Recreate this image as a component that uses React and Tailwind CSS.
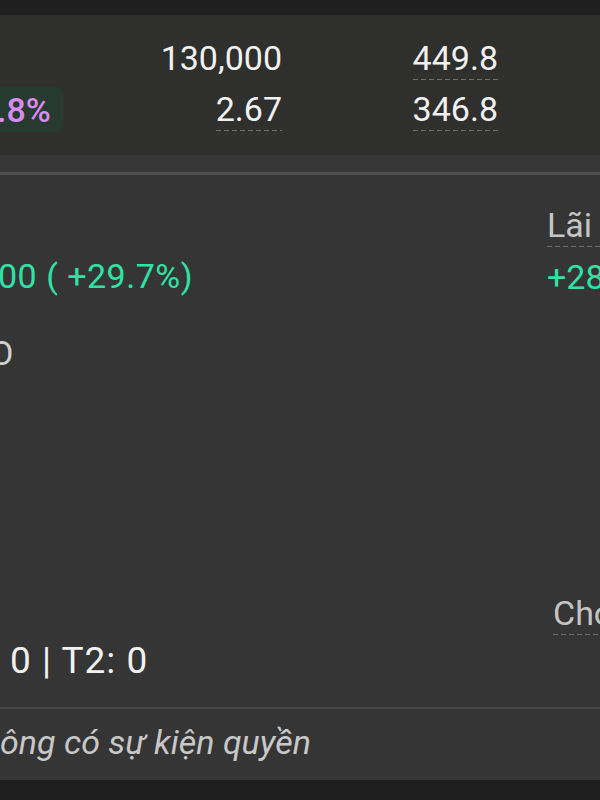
import React from 'react'

const dash = 'h-px w-full bg-[repeating-linear-gradient(90deg,#707070_0_5px,transparent_5px_8px)]'

// Giá trị có gạch chân chấm (tooltip)
function Dotted({ children, className = '' }) {
  return (
    <div className={`inline-flex flex-col ${className}`}>
      <span className="leading-[40px]">{children}</span>
      <span className={`mt-px ${dash}`}></span>
    </div>
  )
}

export default function App() {
  return (
    <div className="w-[600px] h-[800px] overflow-hidden flex flex-col bg-[#353535] font-['Roboto',sans-serif] text-[34px] text-[#f1f1f1]">
      <div className="h-[15px] shrink-0 bg-[#1f1f1f]"></div>

      {/* Bảng giá */}
      <div className="h-[140px] shrink-0 bg-[#2f2f2d] pt-[23px]">
        <div className="flex h-[42px] items-start">
          <div className="w-[63px]"></div>
          <div className="w-[219px] text-right leading-[40px]">130,000</div>
          <div className="w-[216px] flex justify-end">
            <Dotted>449.8</Dotted>
          </div>
        </div>
        <div className="mt-[7px] flex h-[45px] items-center">
          <div className="w-[63px] h-[45px] flex items-center bg-[#263a30] rounded-r-md">
            <span className="-ml-[3px] font-medium text-[#d98cf0] leading-[40px]">.8%</span>
          </div>
          <div className="w-[219px] flex justify-end">
            <Dotted>2.67</Dotted>
          </div>
          <div className="w-[216px] flex justify-end">
            <Dotted>346.8</Dotted>
          </div>
        </div>
      </div>
      <div className="h-[17px] shrink-0 bg-[#363636]"></div>
      <div className="h-[3px] shrink-0 bg-[#4f4f4f]"></div>

      {/* Danh mục */}
      <div className="flex-1 flex min-h-0">
        <div className="w-[547px] shrink-0 flex flex-col pt-[81px]">
          <div className="-ml-[2px] leading-[40px] tracking-[0.5px] text-[#31e2a6] whitespace-nowrap">00 ( +29.7%)</div>
          <div className="mt-[37px] -ml-[10px] leading-[40px] text-[#cfcfcf]">O</div>
          <div className="mt-[268px] pl-[10px] text-[37px] tracking-[1px] leading-[40px] whitespace-nowrap">0 | T2: 0</div>
        </div>
        <div className="flex-1 flex flex-col pt-[30px] whitespace-nowrap">
          <Dotted className="text-[#c4c4c4] w-[80px]">Lãi</Dotted>
          <div className="mt-[10px] leading-[40px] text-[#31e2a6]">+28,000</div>
          <div className="mt-[291px] pl-[6px]">
            <Dotted className="text-[#c4c4c4] w-[80px]">Cho</Dotted>
          </div>
        </div>
      </div>

      <div className="h-[2px] shrink-0 bg-[#474747]"></div>
      <div className="h-[71px] shrink-0 pt-[13px] italic text-[#c8c8c8] leading-[40px] whitespace-nowrap">
        ông có sự kiện quyền
      </div>
      <div className="h-[20px] shrink-0 bg-[#1e1e1e]"></div>
    </div>
  )
}
